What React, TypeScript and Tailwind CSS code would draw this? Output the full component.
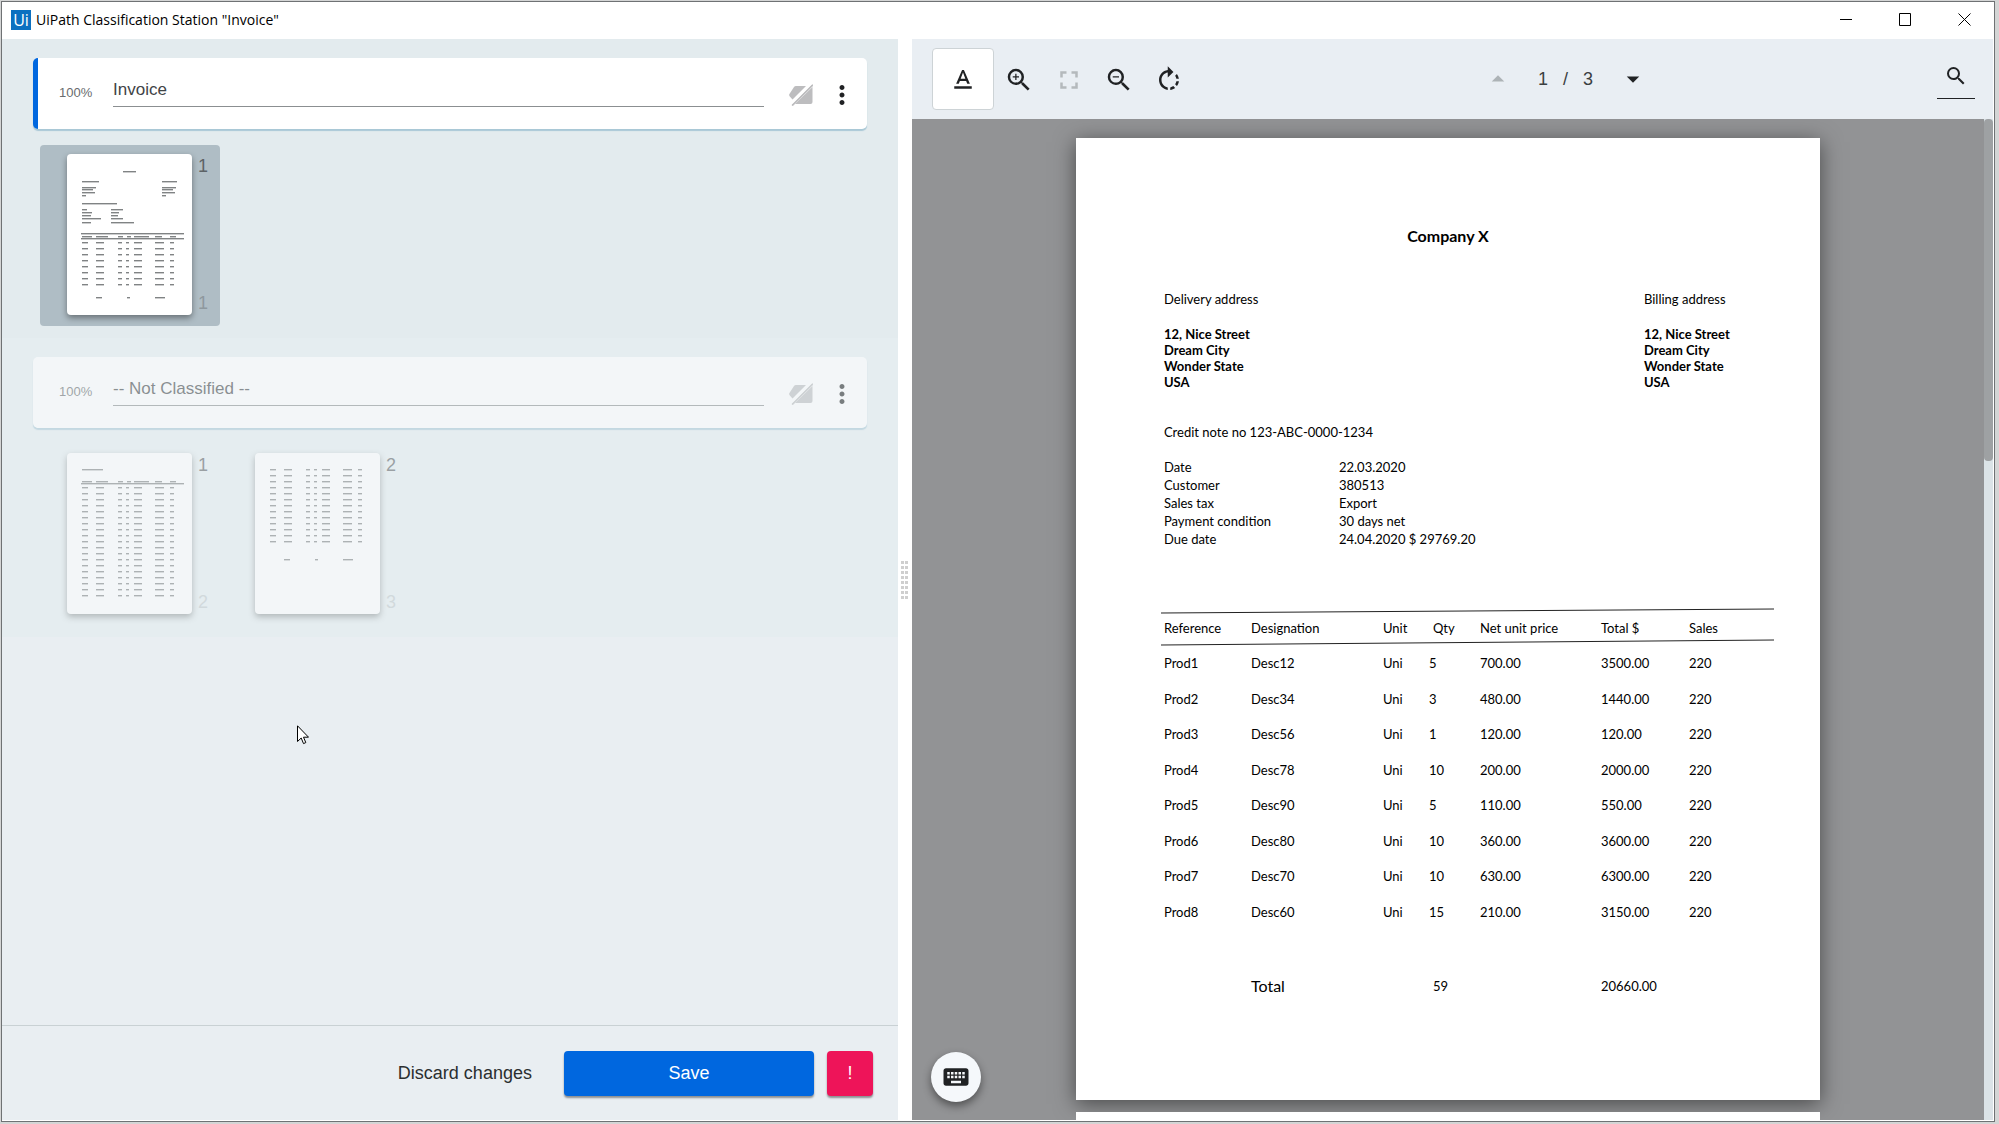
import React from 'react';
import {
  MdArrowDropDown,
  MdArrowDropUp,
  MdFullscreen,
  MdKeyboard,
  MdMoreVert,
  MdRotateRight,
  MdSearch,
  MdTextFormat,
  MdZoomIn,
  MdZoomOut,
} from 'react-icons/md';

type Bar = [x: number, y: number, width: number];

interface Page {
  position: number;
  pageNumber: number;
  selected?: boolean;
  bars: Bar[];
  rules: number[];
}

interface ClassifiedGroup {
  id: string;
  name: string;
  confidence: string;
  active: boolean;
  pages: Page[];
}

// x and width of each invoice column on a page thumbnail
const THUMB_COLUMNS = [[15, 6], [29, 8], [51, 4], [59, 3], [67, 8], [88, 9], [103, 4]];

const rowBars = (start: number, count: number): Bar[] =>
  Array.from({ length: count }).flatMap((_, row) =>
    THUMB_COLUMNS.map(([x, w]): Bar => [x, Math.round(start + row * 6), w])
  );

const headerBars = (y: number): Bar[] => [
  [15, y, 10], [29, y, 12], [51, y, 5], [60, y, 4], [67, y, 15], [88, y, 7], [103, y, 6],
];

const FIRST_PAGE: Bar[] = [
  [56, 17, 13],
  [15, 27, 17], [95, 27, 15],
  [15, 33, 14], [15, 35, 11], [15, 38, 13], [15, 41, 4],
  [95, 33, 14], [95, 35, 11], [95, 38, 13], [95, 41, 4],
  [15, 49, 35],
  [15, 55, 5], [15, 58, 10], [15, 61, 9], [15, 64, 19], [15, 68, 9],
  [44, 55, 12], [44, 58, 8], [44, 61, 7], [44, 64, 12], [44, 68, 23],
  ...headerBars(82),
  ...rowBars(88, 8),
  [29, 143, 6], [60, 143, 3], [88, 143, 10],
];

const GROUPS: ClassifiedGroup[] = [
  {
    id: 'invoice',
    name: 'Invoice',
    confidence: '100%',
    active: true,
    pages: [{ position: 1, pageNumber: 1, selected: true, bars: FIRST_PAGE, rules: [79, 84] }],
  },
  {
    id: 'not-classified',
    name: '-- Not Classified --',
    confidence: '100%',
    active: false,
    pages: [
      {
        position: 1,
        pageNumber: 2,
        bars: [[15, 16, 21], ...headerBars(28), ...rowBars(34, 19)],
        rules: [30],
      },
      {
        position: 2,
        pageNumber: 3,
        bars: [...rowBars(16, 13), [29, 106, 6], [60, 106, 3], [88, 106, 10]],
        rules: [],
      },
    ],
  },
];

const DETAILS = [
  ['Date', '22.03.2020'],
  ['Customer', '380513'],
  ['Sales tax', 'Export'],
  ['Payment condition', '30 days net'],
  ['Due date', '24.04.2020 $ 29769.20'],
];

const ITEMS = [
  ['Prod1', 'Desc12', 'Uni', '5', '700.00', '3500.00', '220'],
  ['Prod2', 'Desc34', 'Uni', '3', '480.00', '1440.00', '220'],
  ['Prod3', 'Desc56', 'Uni', '1', '120.00', '120.00', '220'],
  ['Prod4', 'Desc78', 'Uni', '10', '200.00', '2000.00', '220'],
  ['Prod5', 'Desc90', 'Uni', '5', '110.00', '550.00', '220'],
  ['Prod6', 'Desc80', 'Uni', '10', '360.00', '3600.00', '220'],
  ['Prod7', 'Desc70', 'Uni', '10', '630.00', '6300.00', '220'],
  ['Prod8', 'Desc60', 'Uni', '15', '210.00', '3150.00', '220'],
];

function LabelOffIcon() {
  return (
    <svg viewBox="0 0 24 22" className="w-6 h-[22px]" fill="#bdbdbf" aria-hidden="true">
      <path d="M7 2h10L3.500 15.500.600 12.200a2 2 0 0 1 0-2.400L5 3Q5.700 2 7 2z" />
      <path d="M23.500 3v15a2 2 0 0 1-2 2H6z" />
      <path d="M3 21.500 23.800.700" stroke="#bdbdbf" strokeWidth="2" />
      <path d="M1.500 20.200 22.300-.600" stroke="#fff" strokeWidth="2.200" />
    </svg>
  );
}

function PageThumbnail({ page }: { page: Page }) {
  return (
    <button
      className={`flex w-[180px] h-[181px] pl-[27px] py-[9px] gap-1.5 rounded-sm ${
        page.selected ? 'bg-[#afbdc5]' : ''
      }`}
    >
      <svg
        viewBox="0 0 125 161"
        className="w-[125px] h-[161px] bg-white rounded-sm shadow-[0_3px_6px_rgba(0,0,0,0.4)]"
        aria-hidden="true"
      >
        {page.bars.map(([x, y, w], i) => (
          <rect key={i} x={x} y={y} width={w} height="1.400" fill="#808384" />
        ))}
        {page.rules.map((y) => (
          <rect key={y} x="14" y={y} width="103" height="1.400" fill="#808384" />
        ))}
      </svg>
      <span className="flex flex-col justify-between h-[161px] text-lg leading-6 text-[#5d6366]">
        <span>{page.position}</span>
        <span className={page.selected ? 'opacity-40' : 'opacity-25'}>{page.pageNumber}</span>
      </span>
    </button>
  );
}

function GroupSection({ group }: { group: ClassifiedGroup }) {
  return (
    <section className={`px-[31px] pt-[19px] pb-3 ${group.active ? 'bg-[#e3ebee]' : 'bg-[#e5edf0]'}`}>
      <div className={group.active ? '' : 'opacity-55'}>
        <div
          className={`flex items-start h-[71px] pr-2.5 bg-white rounded-[5px] border-l-[5px] shadow-[0_2px_1px_#a9c8d6] ${
            group.active ? 'border-[#0067df]' : 'border-white'
          }`}
        >
          <label
            htmlFor={group.id}
            className="w-[75px] pl-[21px] pt-[25px] text-[13px] leading-5 font-medium text-[#686c6e]"
          >
            {group.confidence}
          </label>
          <input
            id={group.id}
            defaultValue={group.name}
            className="flex-1 min-w-0 h-[49px] pt-5 pb-1 text-[17px] text-[#3f4447] bg-transparent border-b border-[#8b8f91] outline-none"
          />
          <button className="ml-[25px] mt-[26px]" aria-label="Not classified">
            <LabelOffIcon />
          </button>
          <button className="ml-3.5 mt-[22px]" aria-label="More options">
            <MdMoreVert size={30} color="#202224" />
          </button>
        </div>
        <div className="flex gap-2 pl-[7px] mt-4">
          {group.pages.map((page) => (
            <PageThumbnail key={page.pageNumber} page={page} />
          ))}
        </div>
      </div>
    </section>
  );
}

function TitleBar() {
  return (
    <header className="flex items-center justify-between h-[37px] bg-white pl-[9px] pr-[23px] pb-0.5">
      <div className="flex items-center gap-[5px]">
        <span className="flex items-center justify-center size-5 bg-[#0c70c0] text-white text-base leading-5 font-['Open_Sans',sans-serif]">
          Ui
        </span>
        <h1 className="text-sm text-black font-['Open_Sans',sans-serif]">
          UiPath Classification Station "Invoice"
        </h1>
      </div>
      <div className="flex items-center gap-[46px]">
        <button aria-label="Minimize">
          <svg width="13" height="13" stroke="#000" aria-hidden="true"><path d="M0 6.500h12" /></svg>
        </button>
        <button aria-label="Maximize">
          <svg width="13" height="13" stroke="#000" fill="none" aria-hidden="true"><path d="M.500.500h11v12h-11z" /></svg>
        </button>
        <button aria-label="Close">
          <svg width="13" height="13" stroke="#000" aria-hidden="true"><path d="M.500.500l12 12M12.500.500l-12 12" /></svg>
        </button>
      </div>
    </header>
  );
}

function Toolbar() {
  return (
    <div className="flex items-center h-20 shrink-0 pl-5 pr-[18px] bg-[#e9eef3] text-[#202224]">
      <button
        className="flex items-center justify-center size-[62px] mr-2.5 pt-0.5 bg-white border border-[#cdd3d6] rounded"
        aria-label="Text selection"
      >
        <MdTextFormat size={30} />
      </button>
      <div className="flex gap-5 pt-0.5">
        <button aria-label="Zoom in"><MdZoomIn size={30} /></button>
        <button aria-label="Fit to page" className="text-[#b4b9bc]"><MdFullscreen size={30} /></button>
        <button aria-label="Zoom out"><MdZoomOut size={30} /></button>
        <button aria-label="Rotate"><MdRotateRight size={30} /></button>
      </div>
      <div className="flex flex-1 items-center justify-center pl-2.5 text-lg">
        <button aria-label="Previous page" className="text-[#adb3b6]"><MdArrowDropUp size={30} /></button>
        <span className="flex gap-[15px] px-[25px] whitespace-nowrap text-[#3b3f41]">
          <span>1</span>
          <span>/</span>
          <span>3</span>
        </span>
        <button aria-label="Next page"><MdArrowDropDown size={30} /></button>
      </div>
      <button
        className="flex justify-center w-[38px] h-[39px] pt-1 border-b border-[#202224]"
        aria-label="Search"
      >
        <MdSearch size={24} />
      </button>
    </div>
  );
}

function Address({ title }: { title: string }) {
  return (
    <div className="w-[130px]">
      <p className="leading-5">{title}</p>
      <p className="mt-[17px] font-bold leading-4">
        12, Nice Street
        <br />
        Dream City
        <br />
        Wonder State
        <br />
        USA
      </p>
    </div>
  );
}

function InvoicePage() {
  return (
    <article className="w-[744px] h-[962px] shrink-0 pt-[86px] pl-[85px] pr-[46px] bg-white text-[13px] text-black font-['Lato',sans-serif] shadow-[0_4px_20px_rgba(0,0,0,0.5)]">
      <h2 className="text-base leading-6 font-bold text-center pr-[39px]">Company X</h2>
      <div className="flex justify-between mt-[41px] pl-[3px]">
        <Address title="Delivery address" />
        <Address title="Billing address" />
      </div>
      <p className="mt-8 pl-[3px] leading-5">Credit note no 123-ABC-0000-1234</p>
      <dl className="mt-4 pl-[3px] leading-[18px]">
        {DETAILS.map(([name, value]) => (
          <div key={name} className="flex">
            <dt className="w-[175px]">{name}</dt>
            <dd>{value}</dd>
          </div>
        ))}
      </dl>
      <div className="relative mt-[60px]">
        <svg
          viewBox="0 0 613 38"
          preserveAspectRatio="none"
          className="absolute inset-x-0 top-0 w-full h-[38px]"
          stroke="#222"
          aria-hidden="true"
        >
          <path d="M0 5 613 1M0 37 613 32" />
        </svg>
        <table className="w-full table-fixed text-left">
          <colgroup>
            <col className="w-[90px]" />
            <col className="w-[132px]" />
            <col className="w-[46px]" />
            <col className="w-[51px]" />
            <col className="w-[121px]" />
            <col className="w-[88px]" />
            <col />
          </colgroup>
          <thead>
            <tr className="h-[37px] leading-5 whitespace-nowrap">
              <th className="font-normal pt-[3px] pl-[3px]">Reference</th>
              <th className="font-normal pt-[3px]">Designation</th>
              <th className="font-normal pt-[3px]">Unit</th>
              <th className="font-normal pt-[3px] pl-1">Qty</th>
              <th className="font-normal pt-[3px]">Net unit price</th>
              <th className="font-normal pt-[3px]">Total $</th>
              <th className="font-normal pt-[3px]">Sales</th>
            </tr>
          </thead>
          <tbody>
            {ITEMS.map((item) => (
              <tr key={item[0]} className="h-9 even:h-[35px] leading-5">
                {item.map((cell, i) => (
                  <td key={i} className="first:pl-[3px]">{cell}</td>
                ))}
              </tr>
            ))}
          </tbody>
          <tfoot>
            <tr className="h-[113px] leading-5">
              <td />
              <td className="text-base leading-5">Total</td>
              <td />
              <td className="pl-1">59</td>
              <td />
              <td>20660.00</td>
              <td />
            </tr>
          </tfoot>
        </table>
      </div>
    </article>
  );
}

export default function App() {
  return (
    <div className="h-screen pl-px pt-px pr-1 pb-0.5 bg-[#d4d5d5] font-['Liberation_Sans',Arial,sans-serif]">
      <div className="relative flex flex-col h-full border border-[#6f7274] bg-white overflow-hidden">
        <TitleBar />
        <main className="flex flex-1 min-h-0 pr-px pb-px">
          <div className="flex flex-col w-[45%] bg-[#e9eef2]">
            <div className="flex-1 min-h-0 overflow-hidden">
              {GROUPS.map((group) => (
                <GroupSection key={group.id} group={group} />
              ))}
            </div>
            <footer className="flex justify-end items-start h-[95px] pt-[25px] pr-[25px] border-t border-[#c9d1d4] text-lg">
              <button className="h-[45px] px-8 pb-0.5 text-[#2b2e30]">Discard changes</button>
              <button className="w-[250px] h-[45px] pb-0.5 rounded bg-[#0067df] text-white shadow-[0_2px_2px_rgba(0,0,0,0.4)]">
                Save
              </button>
              <button className="w-[46px] h-[45px] ml-[13px] pb-0.5 rounded bg-[#ee1459] text-white shadow-[0_2px_2px_rgba(0,0,0,0.4)]">
                !
              </button>
            </footer>
          </div>

          <div className="flex items-center justify-center w-3.5 bg-white" role="separator">
            <div className="grid grid-cols-2 gap-x-px gap-y-0.5">
              {Array.from({ length: 16 }).map((_, i) => (
                <span key={i} className="size-[3px] bg-[#cfcfcf]" />
              ))}
            </div>
          </div>

          <div className="relative flex flex-col flex-1 min-w-0">
            <Toolbar />
            <div className="flex flex-1 min-h-0">
              <div className="flex flex-col flex-1 items-center gap-3 pt-[19px] bg-[#929395] overflow-hidden">
                <InvoicePage />
                <div className="w-[744px] h-[962px] shrink-0 bg-white" />
              </div>
              <div className="w-[9px] bg-[#dbe3e7]">
                <div className="h-[342px] rounded bg-[#9ea1a3]" />
              </div>
            </div>
            <button
              className="absolute left-[19px] bottom-[18px] flex items-center justify-center size-[50px] rounded-full bg-[#f5f8fb] text-[#202224] shadow-[0_4px_8px_rgba(0,0,0,0.45)]"
              aria-label="Keyboard shortcuts"
            >
              <MdKeyboard size={30} />
            </button>
          </div>
        </main>

        <svg viewBox="0 0 12 20" className="absolute left-[295px] top-[723px] w-3 h-5" aria-hidden="true">
          <path
            d="M.500.800v15.700l3.700-3.500 2.300 5.600 2.300-1-2.300-5.400h5z"
            fill="#fff"
            stroke="#000"
          />
        </svg>
      </div>
    </div>
  );
}
